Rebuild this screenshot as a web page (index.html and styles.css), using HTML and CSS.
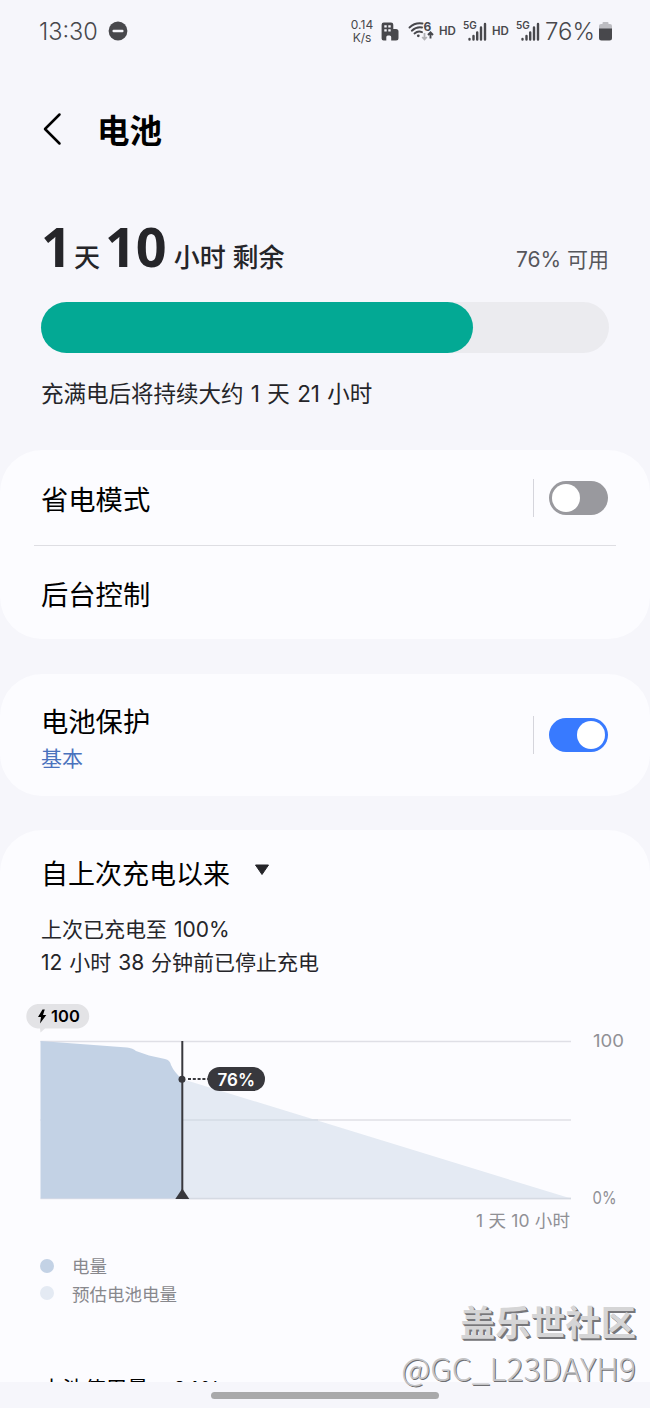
FILE: index.html
```html
<!DOCTYPE html>
<html lang="zh-CN">
  <head>
    <meta charset="UTF-8" />
    <meta name="viewport" content="width=device-width, initial-scale=1.0" />
    <title>电池</title>
    <link rel="stylesheet" href="styles.css">
  </head>
  <body>
    <div class="screen">
      <!-- Status bar -->
      <div class="status-bar">
        <div class="status-left">
          <span class="clock">13:30</span>
          <svg width="20" height="20" viewBox="0 0 20 20">
            <circle cx="10" cy="10" r="9.4" fill="#48484c" />
            <rect x="4.5" y="8.8" width="11" height="2.4" rx="1" fill="#f6f6fb" />
          </svg>
        </div>
        <div class="status-right">
          <div class="speed"><span>0.14</span><span>K/s</span></div>
          <svg class="building" width="18" height="20" viewBox="0 0 18 20">
            <path d="M3 .5h7a2.3 2.3 0 0 1 2.3 2.3V7H15a2.5 2.5 0 0 1 2.5 2.5V16a2.5 2.5 0 0 1-2.5 2.5h-4.8V15a1.5 1.5 0 0 0-1.5-1.5H6.8A1.5 1.5 0 0 0 5.3 15v3.5H2.6A2 2 0 0 1 .6 16.5V2.8A2.3 2.3 0 0 1 3 .5z" fill="#48484c" />
            <path d="M3.300 3.200h2.400v2.300H3.300zM7.300 3.200h2.400v2.300H7.300zM3.300 7.200h2.400v2.300H3.300zM7.300 7.200h2.400v2.300H7.300z" fill="#f6f6fb" />
          </svg>
          <svg class="wifi" width="26" height="21" viewBox="0 0 26 21">
            <g fill="none" stroke="#48484c" stroke-width="1.9" stroke-linecap="round">
              <path d="M1.500 6.500Q7 1.300 14.500 2.500" />
              <path d="M3.800 9.700Q8.500 5.500 14 6.500" />
              <path d="M6.500 12.500Q10 9.500 14 11.200" />
            </g>
            <circle cx="10.3" cy="14.8" r="1.4" fill="#48484c" />
            <path d="M16.500 12v6M14.200 16l2.300 2.500 2.300-2.500" fill="none" stroke="#b2b2b6" stroke-width="1.8" />
            <path d="M22.500 17.500V12M20 14l2.500-2.700L25 14" fill="none" stroke="#48484c" stroke-width="1.9" />
            <text x="15.5" y="9.5" class="wifi-text">6</text>
          </svg>
          <span class="hd">HD</span>
          <svg class="signal" width="24" height="22" viewBox="0 0 24 22">
            <text x="0" y="8.5" class="signal-text">5G</text>
            <path d="M6.500 19.500v-.6M10.500 19.500v-3.500M14.200 19.500v-7M18 19.500V7.500M22 19.500V4" stroke="#48484c" stroke-width="2.4" stroke-linecap="round" />
          </svg>
          <span class="hd">HD</span>
          <svg class="signal" width="24" height="22" viewBox="0 0 24 22">
            <text x="0" y="8.5" class="signal-text">5G</text>
            <path d="M6.500 19.500v-.6M10.500 19.500v-3.500M14.200 19.500v-7M18 19.500V7.500M22 19.500V4" stroke="#48484c" stroke-width="2.4" stroke-linecap="round" />
          </svg>
          <span class="percent">76%</span>
          <svg class="battery" width="13" height="19" viewBox="0 0 13 19">
            <path d="M4.500 0h4a1 1 0 0 1 1 1v1H11a2 2 0 0 1 2 2v3H0V4a2 2 0 0 1 2-2h1.500V1a1 1 0 0 1 1-1z" fill="#bdbdc2" />
            <path d="M0 6.500h13V16a2.500 2.500 0 0 1-2.500 2.500h-8A2.500 2.500 0 0 1 0 16z" fill="#48484c" />
          </svg>
        </div>
      </div>

      <!-- Title -->
      <header class="header">
        <svg width="20" height="34" viewBox="0 0 20 34">
          <path d="M17.500 2.500L3 17l14.500 14.500" fill="none" stroke="#000" stroke-width="2.500" stroke-linecap="round" stroke-linejoin="round" />
        </svg>
        <h1>电池</h1>
      </header>

      <!-- Remaining time -->
      <section class="summary">
        <div class="summary-row">
          <div class="remaining">
            <span class="big">1</span><span class="unit unit-day">天</span><span class="big">10</span><span class="unit unit-hour">小时 剩余</span>
          </div>
          <div class="available">76% 可用</div>
        </div>
        <div class="bar"><div class="bar-fill" style="width: 76%"></div></div>
        <p class="estimate">充满电后将持续大约 1 天 21 小时</p>
      </section>

      <section class="card card-modes">
        <div class="row">
          <span class="label">省电模式</span>
          <span class="divider"></span>
          <span class="switch"></span>
        </div>
        <div class="row row-second">
          <span class="label">后台控制</span>
        </div>
      </section>

      <section class="card card-protect">
        <div class="row">
          <div class="label-group">
            <span class="label">电池保护</span>
            <span class="sub">基本</span>
          </div>
          <span class="divider"></span>
          <span class="switch on"></span>
        </div>
      </section>

      <section class="card card-usage">
        <div class="usage-title">
          <span class="label">自上次充电以来</span>
          <svg width="16" height="12" viewBox="0 0 16 12">
            <path d="M1.500 1h13L8 10.500z" fill="#252529" stroke="#252529" stroke-linejoin="round" />
          </svg>
        </div>
        <p class="usage-text">上次已充电至 100%<br>12 小时 38 分钟前已停止充电</p>

        <!-- Battery level chart -->
        <svg class="chart" width="650" height="250" viewBox="0 990 650 250">
          <path d="M40.500 1041.500H571M40.500 1120H571M40.500 1198.500H571" stroke="#dfdfe6" stroke-width="1.500" />
          <path d="M182 1079L571 1198.500H182z" fill="#e4eaf3" />
          <path d="M182 1120H318" stroke="#d5dbe5" stroke-width="1.500" />
          <path d="M40.500 1041L127 1047.500Q133 1048 136 1051L149 1055.500L165 1059Q170 1060 171 1065Q174 1072 182 1079V1198.500H40.500z" fill="#c3d2e5" />
          <path d="M182 1198.500H571" stroke="#d5dae3" stroke-width="1.500" />
          <path d="M182.300 1041V1198" stroke="#38383d" stroke-width="2" />
          <circle cx="182" cy="1079.2" r="3.5" fill="#38383d" />
          <path d="M182.300 1188.500L189.300 1199H175.300z" fill="#38383d" />
          <path d="M188 1079H208" stroke="#38383d" stroke-width="2" stroke-dasharray="3 1.8" />
          <rect x="207.5" y="1067" width="57.5" height="24" rx="12" fill="#38383d" />
          <text x="236.3" y="1085.7" class="chart-now">76%</text>
          <path d="M37.500 1004h40.500a12.300 12.300 0 0 1 0 24.500H45l-4.500 4-.5-4h-2.500a12.300 12.300 0 0 1 0-24.500z" fill="#e3e3e6" />
          <path d="M42.500 1009.500L38 1017h3l-1 6.500 6.300-8.500h-3.300l1.800-5.500z" fill="#000" />
          <text x="51" y="1022.3" class="chart-full" textLength="29">100</text>
          <text x="593" y="1047" class="chart-axis" textLength="31" lengthAdjust="spacingAndGlyphs">100</text>
          <text x="592.5" y="1204.3" class="chart-axis" textLength="24" lengthAdjust="spacingAndGlyphs">0%</text>
          <text x="476" y="1227" class="chart-axis" textLength="94">1 天 10 小时</text>
        </svg>

        <div class="legend">
          <div class="legend-item"><i class="dot"></i>电量</div>
          <div class="legend-item"><i class="dot dot-light"></i>预估电池电量</div>
        </div>
        <div class="usage-next">电池使用量：<span class="usage-value">24%</span></div>
      </section>

      <div class="nav-bar"><span class="nav-handle"></span></div>

      <div class="watermark">
        <div class="watermark-name">盖乐世社区</div>
        <div class="watermark-user">@GC_L23DAYH9</div>
      </div>
    </div>
  </body>
</html>
```
FILE: styles.css
```css
* {
  box-sizing: border-box;
}

body {
  margin: 0;
  background-color: #f6f6fb;
  color: #252529;
  font-family: Inter, "Noto Sans CJK SC", sans-serif;
}

h1,
p {
  margin: 0;
}

svg {
  display: block;
  flex: none;
}

.screen {
  position: relative;
  display: flex;
  flex-direction: column;
  width: 650px;
  height: 1408px;
  overflow: hidden;
}

/* Status bar */
.status-bar {
  display: flex;
  justify-content: space-between;
  height: 62px;
  padding: 0 38px 0 39px;
  color: #48484c;
}

.status-left,
.status-right {
  display: flex;
  align-items: center;
}

.status-left {
  gap: 10px;
}

.clock {
  font-size: 23.5px;
  font-weight: 300;
}

.speed {
  display: flex;
  flex-direction: column;
  align-items: center;
  width: 24px;
  margin-right: 7px;
  font-size: 12px;
  line-height: 13.5px;
}

.building {
  margin-top: 2px;
}

.wifi {
  margin-left: 9px;
  overflow: visible;
}

.wifi-text {
  font-size: 12px;
  font-weight: 700;
  fill: #48484c;
}

.hd {
  width: 17px;
  margin-left: 5px;
  font-size: 11.5px;
  font-weight: 600;
}

.signal {
  margin-left: 7px;
}

.signal-text {
  font-size: 10px;
  font-weight: 600;
  fill: #48484c;
}

.percent {
  margin-left: 5px;
  font-size: 24px;
  font-weight: 300;
}

.battery {
  margin-left: 4px;
}

/* Title */
.header {
  display: flex;
  align-items: center;
  height: 132px;
  padding: 2px 42px 0;
  gap: 35px;
}

.header h1 {
  padding-top: 6px;
  color: #000;
  font-size: 32.5px;
  font-weight: 600;
  line-height: 46px;
}

/* Remaining time and level bar */
.summary {
  height: 256px;
  padding: 27px 41px 0;
}

.summary-row {
  display: flex;
  justify-content: space-between;
  align-items: baseline;
  height: 81px;
}

.remaining {
  display: flex;
  align-items: baseline;
  line-height: 50px;
}

.big {
  font-family: "Noto Sans", sans-serif;
  font-size: 54px;
  font-weight: 700;
}

.unit {
  font-size: 26px;
  font-weight: 500;
}

.unit-day {
  margin: 0 5px 0 2px;
}

.unit-hour {
  margin-left: 7px;
}

.available {
  color: #56565b;
  font-size: 21px;
}

.bar {
  height: 51px;
  border-radius: 26px;
  background-color: #ebebef;
}

.bar-fill {
  height: 100%;
  border-radius: 26px;
  background-color: #03a994;
}

.estimate {
  margin-top: 24px;
  font-size: 22.5px;
  line-height: 34px;
  word-spacing: 1px;
}

/* Cards */
.card {
  flex: none;
  border-radius: 42px;
  background-color: #fcfcff;
}

.row {
  display: flex;
  align-items: center;
  height: 95px;
  padding: 0 42px 0 41px;
}

.card-modes {
  height: 189px;
}

.row-second {
  height: 94px;
  margin: 0 34px;
  padding: 0 7px;
  border-top: 1px solid #dedee3;
}

.label {
  flex: 1;
  padding-top: 7px;
  color: #000;
  font-size: 27.3px;
  line-height: 38px;
}

.divider {
  width: 1px;
  height: 38px;
  margin-right: 15px;
  background-color: #d5d5dc;
}

.switch {
  display: flex;
  width: 59px;
  height: 34px;
  padding: 3px;
  border-radius: 17px;
  background-color: #99999e;
}

.switch::before {
  content: "";
  width: 28px;
  height: 28px;
  border-radius: 50%;
  background-color: #fff;
}

.switch.on {
  justify-content: flex-end;
  background-color: #387aff;
}

.card-protect {
  height: 122px;
  margin-top: 35px;
}

.card-protect .row {
  height: 122px;
}

.label-group {
  display: flex;
  flex: 1;
  flex-direction: column;
  padding-top: 2px;
}

.sub {
  color: #4a72bd;
  font-size: 21px;
  line-height: 34px;
}

/* Usage since last charge */
.card-usage {
  height: 552px;
  margin-top: 34px;
  border-radius: 42px 42px 0 0;
  overflow: hidden;
}

.usage-title {
  display: flex;
  align-items: center;
  gap: 24px;
  height: 83px;
  padding: 0 41px;
}

.usage-title .label {
  flex: none;
  font-size: 27px;
}

.usage-title svg {
  margin-top: -3px;
}

.usage-text {
  height: 77px;
  padding-left: 41px;
  font-size: 21px;
  line-height: 33px;
  word-spacing: 1px;
}

.chart-now {
  font-size: 17px;
  font-weight: 600;
  text-anchor: middle;
  fill: #fff;
}

.chart-full {
  font-size: 16.5px;
  font-weight: 600;
  fill: #000;
}

.chart-axis {
  font-size: 17.5px;
  fill: #909095;
}

.legend {
  height: 134px;
  padding: 12px 40px 0;
}

.legend-item {
  display: flex;
  align-items: center;
  gap: 18px;
  height: 27.5px;
  color: #88888d;
  font-size: 17.5px;
}

.dot {
  width: 14px;
  height: 14px;
  border-radius: 50%;
  background-color: #c3d2e5;
}

.dot-light {
  background-color: #e4eaf3;
}

.usage-next {
  padding-left: 41px;
  color: #000;
  font-size: 21.5px;
  line-height: 30px;
}

.usage-value {
  margin-left: 3px;
}

/* Gesture bar */
.nav-bar {
  display: flex;
  justify-content: center;
  flex: 1;
  padding-top: 10px;
}

.nav-handle {
  width: 228px;
  height: 7px;
  border-radius: 4px;
  background-color: #a9a9aa;
}

/* Embossed signature over the lower right corner */
.watermark {
  position: absolute;
  right: 14px;
  bottom: 21px;
  color: #d5d5d6;
  font-family: "Noto Sans CJK SC", sans-serif;
  text-align: right;
}

.watermark-name {
  font-size: 35.2px;
  font-weight: 600;
  line-height: 52px;
  text-shadow: 1px 1px 0 #77777a, 2px 2px 0 #77777a;
}

.watermark-user {
  color: #c4c4c6;
  font-size: 32px;
  font-weight: 300;
  line-height: 40px;
  text-shadow: 1px 1px 0 #6f6f72;
}
```
